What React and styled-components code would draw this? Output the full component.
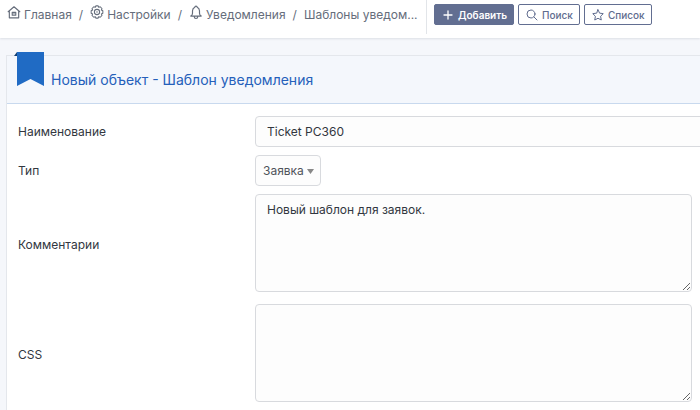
import React from "react";
import styled, { createGlobalStyle, css } from "styled-components";

const GlobalStyle = createGlobalStyle`
  *, *::before, *::after { box-sizing: border-box; }
  body {
    margin: 0;
    background: #f5f7fb;
    color: #32373f;
    font: 400 12px/20px Inter, "Noto Sans", sans-serif;
    overflow-x: hidden;
  }
  button, input, select, textarea { font: inherit; color: inherit; margin: 0; }
`;

const Page = styled.div`
  min-height: 100vh;
  overflow: hidden;
`;

const TopBar = styled.header`
  display: flex;
  align-items: flex-start;
  height: 38px;
  background: #fff;
  box-shadow: 0 1px 2px #dcdfe5;
`;

const Breadcrumb = styled.nav`
  flex: 0 0 426px;
  padding: 5px 0 0 7px;
`;

const Crumbs = styled.ol`
  display: flex;
  margin: 0;
  padding: 0;
  list-style: none;
  color: #656d7b;
  white-space: nowrap;
`;

const Crumb = styled.li`
  display: flex;
  & + &::before {
    content: "/";
    padding: 0 7px;
  }
`;

const CrumbLink = styled.a`
  display: flex;
  gap: 3px;
  color: inherit;
  text-decoration: none;
`;

const Icon = styled.svg`
  flex: none;
  width: ${(p) => p.$size}px;
  height: ${(p) => p.$size}px;
  fill: none;
  stroke: currentColor;
  stroke-width: ${(p) => p.$stroke || 2};
  stroke-linecap: round;
  stroke-linejoin: round;
`;

const Actions = styled.div`
  display: flex;
  gap: 4px;
  height: 34px;
  padding: 4px 0 0 7px;
  border-left: 1px solid #e2e5e9;
`;

const ActionButton = styled.button`
  display: flex;
  align-items: center;
  gap: 4px;
  height: 21px;
  padding: 0 6px 0 7px;
  border: 1px solid #626e91;
  border-radius: 2px;
  background: #fff;
  color: #606c8e;
  font-size: 10px;
  font-weight: 500;
  white-space: nowrap;
  ${(p) =>
    p.$primary &&
    css`
      background: #626e91;
      color: #fff;
      font-weight: 600;
    `}
`;

const Card = styled.main`
  margin: 17px -8px 0 6px;
  border: 1px solid #e4e7ec;
  background: #fff;
`;

const CardHeader = styled.div`
  display: flex;
  align-items: center;
  position: relative;
  height: 48px;
  padding-left: 44px;
  border-bottom: 1px solid #c8d9ee;
  background: #f4f7fc;
`;

const Ribbon = styled.svg`
  position: absolute;
  top: -4px;
  left: 7px;
  width: 30px;
  height: 34px;
`;

const Title = styled.h1`
  margin: 0;
  color: #2560ba;
  font-size: 14px;
  font-weight: 400;
  line-height: 20px;
`;

const Form = styled.form`
  display: grid;
  gap: 8px;
  padding: 12px 0 8px 11px;
`;

const Row = styled.div`
  display: grid;
  grid-template-columns: 237px 1fr;
  align-items: center;
`;

const Label = styled.label`
  font-size: 12px;
`;

const fieldStyle = css`
  border: 1px solid #d8dade;
  border-radius: 4px;
  background: #fdfdfd;
  outline: none;
`;

const TextInput = styled.input`
  ${fieldStyle}
  width: 100%;
  height: 31px;
  padding: 0 11px;
`;

const SelectBox = styled.div`
  display: grid;
  grid-template-columns: auto 18px;
  justify-self: start;
  align-items: center;
`;

const Select = styled.select`
  ${fieldStyle}
  grid-area: 1 / 1 / 2 / 3;
  height: 31px;
  padding: 0 16px 0 7px;
  color: #50545b;
  appearance: none;
`;

const Caret = styled.svg`
  grid-area: 1 / 2;
  width: 7px;
  height: 5px;
  margin: 2px 0 0 4px;
  fill: #888;
  pointer-events: none;
`;

const TextField = styled.div`
  padding: 0 15px 4px 0;
`;

const TextArea = styled.textarea`
  ${fieldStyle}
  display: block;
  width: 100%;
  height: 98px;
  padding: 5px 11px;
  resize: both;
`;

const HomeIcon = () => (
  <Icon $size={14} viewBox="0 0 24 24" aria-hidden="true">
    <path d="M2 11.500 12 3l10 8.500M4 10v12h16V10M9 12.500h6v5H9z" />
    <path d="M12 14.500v1" />
  </Icon>
);

const GearIcon = () => (
  <Icon $size={14} $stroke={1.8} viewBox="0 0 24 24" aria-hidden="true">
    <path d="m9 4 1-2.500h4L15 4l2.500-1 3 3-1 2.700L22 10v4l-2.500 1.300 1 2.700-3 3-2.500-1-1 2.500h-4L9 20l-2.500 1-3-3 1-2.700L2 14v-4l2.500-1.300-1-2.700 3-3z" />
    <circle cx="12" cy="12" r="4.500" />
    <circle cx="12" cy="12" r="0.500" />
  </Icon>
);

const BellIcon = () => (
  <Icon $size={14} viewBox="0 0 24 24" aria-hidden="true">
    <path d="M10 4a2 2 0 1 1 4 0 7 7 0 0 1 4 6v4c0 2 1 4 3 5H3c2-1 3-3 3-5v-4a7 7 0 0 1 4-6M9 19v1a3 3 0 0 0 6 0v-1" />
  </Icon>
);

const PlusIcon = () => (
  <Icon $size={12} $stroke={2.6} viewBox="0 0 24 24" aria-hidden="true">
    <path d="M12 4v16M4 12h16" />
  </Icon>
);

const SearchIcon = () => (
  <Icon $size={12} $stroke={2} viewBox="0 0 24 24" aria-hidden="true">
    <circle cx="10" cy="10" r="8" />
    <path d="m16 16 6 6" />
  </Icon>
);

const StarIcon = () => (
  <Icon $size={12} $stroke={2} viewBox="0 0 24 24" aria-hidden="true">
    <path d="m12 1.500 3.200 6.800 7.300 1-5.300 5.200 1.300 7.500L12 18.500 5.500 22l1.300-7.500L1.500 9.300l7.300-1z" />
  </Icon>
);

const crumbs = [
  { text: "Главная", icon: <HomeIcon /> },
  { text: "Настройки", icon: <GearIcon /> },
  { text: "Уведомления", icon: <BellIcon /> },
  { text: "Шаблоны уведом..." },
];

export default function App() {
  return (
    <Page>
      <GlobalStyle />
      <TopBar>
        <Breadcrumb aria-label="Навигация">
          <Crumbs>
            {crumbs.map(({ text, icon }) => (
              <Crumb key={text}>
                <CrumbLink href="#">
                  {icon}
                  <span>{text}</span>
                </CrumbLink>
              </Crumb>
            ))}
          </Crumbs>
        </Breadcrumb>
        <Actions>
          <ActionButton type="button" $primary><PlusIcon />Добавить</ActionButton>
          <ActionButton type="button"><SearchIcon />Поиск</ActionButton>
          <ActionButton type="button"><StarIcon />Список</ActionButton>
        </Actions>
      </TopBar>
      <Card>
        <CardHeader>
          <Ribbon viewBox="0 0 30 34" aria-hidden="true">
            <path d="M0 4 3 0v4z" fill="#123f73" />
            <path d="M3 0h27v34l-13.500-7L3 34z" fill="#206bc4" />
          </Ribbon>
          <Title>Новый объект - Шаблон уведомления</Title>
        </CardHeader>
        <Form>
          <Row>
            <Label htmlFor="name">Наименование</Label>
            <TextInput id="name" defaultValue="Ticket PC360" />
          </Row>
          <Row>
            <Label htmlFor="type">Тип</Label>
            <SelectBox>
              <Select id="type" defaultValue="ticket">
                <option value="ticket">Заявка</option>
              </Select>
              <Caret viewBox="0 0 7 5" aria-hidden="true"><path d="M0 0h7L3.500 5z" /></Caret>
            </SelectBox>
          </Row>
          <Row>
            <Label htmlFor="comment">Комментарии</Label>
            <TextField>
              <TextArea id="comment" defaultValue="Новый шаблон для заявок." />
            </TextField>
          </Row>
          <Row>
            <Label htmlFor="css">CSS</Label>
            <TextField>
              <TextArea id="css" />
            </TextField>
          </Row>
        </Form>
      </Card>
    </Page>
  );
}
